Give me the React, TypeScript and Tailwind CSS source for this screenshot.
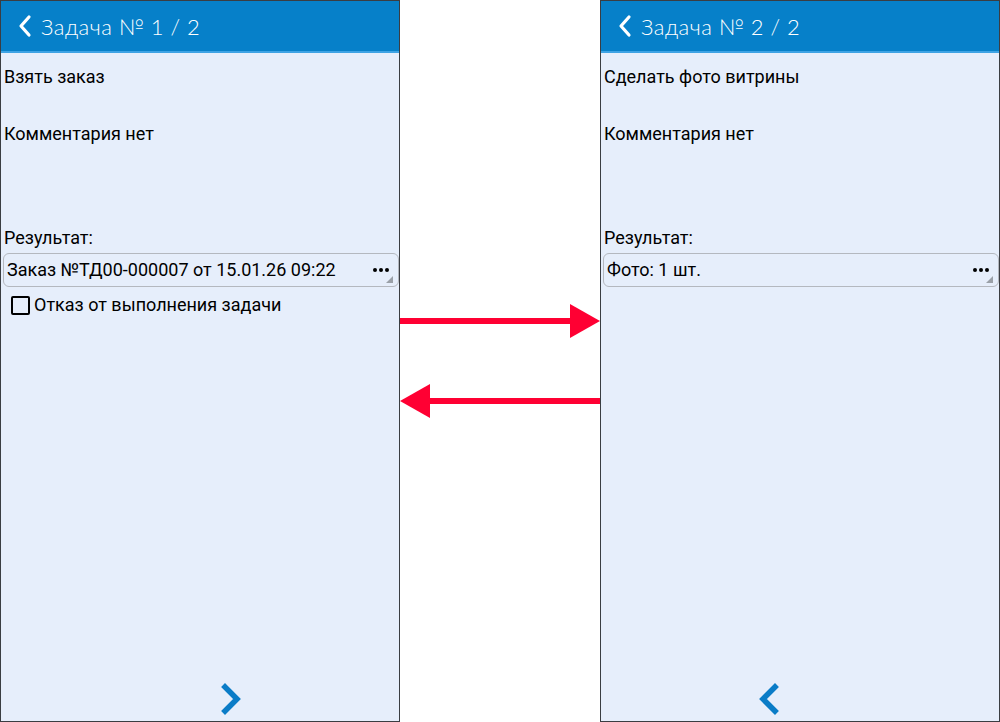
const textFont = { fontFamily: "Roboto, 'Liberation Sans', sans-serif" };

function Chevron({ dir }: { dir: "left" | "right" }) {
  return (
    <svg width="22" height="32" viewBox="0 0 22 32" className="block">
      <path
        d={dir === "right" ? "M4 4 L16 16 L4 28" : "M18 4 L6 16 L18 28"}
        fill="none"
        stroke="#0a7cc7"
        strokeWidth="5.5"
        strokeLinecap="square"
      />
    </svg>
  );
}

function Field({ value }: { value: string }) {
  return (
    <div className="relative ml-[2px] h-[34px] rounded-[6px] border border-[#b4b8bf] bg-[#e6eefb] flex items-center pl-[3px]">
      <span className="text-[18px] text-black leading-none">{value}</span>
      <div className="absolute right-[9px] top-[14px] flex gap-[2px]">
        <span className="w-[4px] h-[4px] rounded-full bg-black" />
        <span className="w-[4px] h-[4px] rounded-full bg-black" />
        <span className="w-[4px] h-[4px] rounded-full bg-black" />
      </div>
      <svg width="7" height="7" viewBox="0 0 7 7" className="absolute right-[5px] bottom-[3px]">
        <path d="M7 0 L7 7 L0 7 Z" fill="#9aa0a8" />
      </svg>
    </div>
  );
}

function Screen({
  num,
  title,
  value,
  refusal,
  prev,
  next,
}: {
  num: number;
  title: string;
  value: string;
  refusal?: boolean;
  prev?: boolean;
  next?: boolean;
}) {
  return (
    <div className="w-[400px] h-[722px] flex flex-col border border-[#3a3d42] bg-[#e6eefb]" style={textFont}>
      <div className="h-[52px] bg-[#0680c9] border-b-2 border-[#3ea3e4] flex items-center pl-[16px] shrink-0">
        <svg width="16" height="24" viewBox="0 0 16 24" className="mr-[8px]">
          <path d="M12 3 L4 12 L12 21" fill="none" stroke="#fff" strokeWidth="3.2" strokeLinecap="round" strokeLinejoin="round" />
        </svg>
        <span
          className="text-white text-[22px] font-light tracking-[0.5px]"
          style={{ fontFamily: "Lato, 'Open Sans', sans-serif" }}
        >
          Задача № {num} / 2
        </span>
      </div>
      <div className="flex-1 flex flex-col">
        <div className="pl-[3px] pt-[14px] text-[18px] leading-[20px] text-black">{title}</div>
        <div className="pl-[3px] mt-[37px] text-[18px] leading-[20px] text-black">Комментария нет</div>
        <div className="pl-[3px] mt-[84px] text-[18px] leading-[20px] text-black">Результат:</div>
        <div className="mt-[5px]">
          <Field value={value} />
        </div>
        {refusal && (
          <div className="flex items-center mt-[8px] pl-[10px]">
            <span className="w-[19px] h-[19px] border-2 border-black rounded-[2px]" />
            <span className="ml-[4px] text-[18px] leading-[20px] text-black">Отказ от выполнения задачи</span>
          </div>
        )}
        <div className="flex-1" />
        <div className="flex justify-center pb-[6px]">
          <div className={`w-[64px] flex justify-center ${prev ? "" : "invisible"}`}>
            <Chevron dir="left" />
          </div>
          <div className={`w-[64px] flex justify-center ${next ? "" : "invisible"}`}>
            <Chevron dir="right" />
          </div>
        </div>
      </div>
    </div>
  );
}

export default function App() {
  return (
    <div className="w-[1000px] h-[722px] flex bg-white overflow-hidden">
      <Screen num={1} title="Взять заказ" value="Заказ №ТД00-000007 от 15.01.26 09:22" refusal next />
      <div className="w-[200px] h-[722px] shrink-0">
        <svg width="200" height="722" viewBox="0 0 200 722" className="block">
          <rect x="0" y="318" width="172" height="6" fill="#ff0033" />
          <path d="M170 304 L200 321 L170 338 Z" fill="#ff0033" />
          <rect x="28" y="398" width="172" height="6" fill="#ff0033" />
          <path d="M30 384 L0 401 L30 418 Z" fill="#ff0033" />
        </svg>
      </div>
      <Screen num={2} title="Сделать фото витрины" value="Фото: 1 шт." prev />
    </div>
  );
}
